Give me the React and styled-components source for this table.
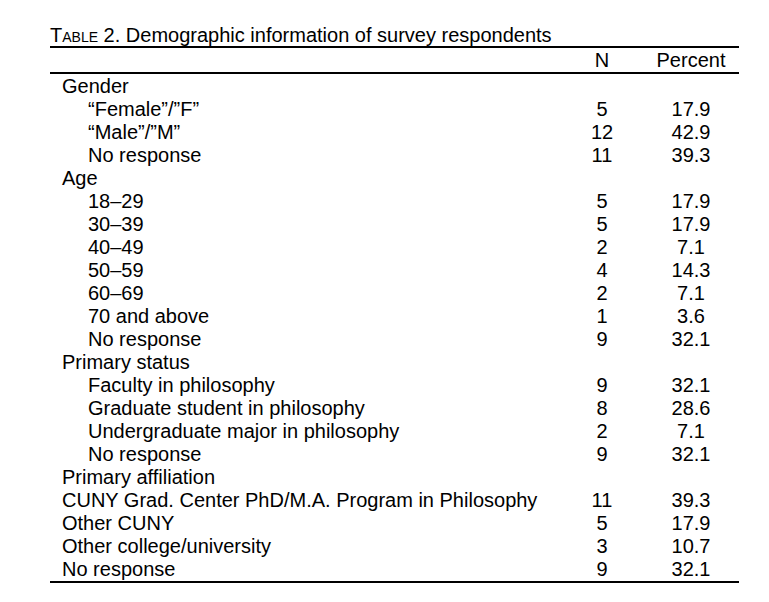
import React from "react";
import styled, { createGlobalStyle } from "styled-components";

const Global = createGlobalStyle`
  html, body { margin: 0; padding: 0; background: #fff; }
  body { font-family: "Liberation Sans", Arial, sans-serif; color: #000; }
`;

const Page = styled.div`
  width: 769px;
  height: 602px;
  padding: 24px 0 0 50px;
  box-sizing: border-box;
`;

const Caption = styled.div`
  font-size: 20px;
  line-height: 22px;
  height: 22px;
  white-space: nowrap;
`;

const SmallCaps = styled.span`
  font-variant: small-caps;
`;

const Table = styled.div`
  width: 689px;
  border-top: 2px solid #000;
  border-bottom: 2px solid #000;
`;

const Body = styled.div`
  padding-top: 1px;
`;

const Row = styled.div`
  display: grid;
  grid-template-columns: 1fr 82px 96px;
  height: ${(p) => (p.$head ? "24px" : "23px")};
  line-height: ${(p) => (p.$head ? "24px" : "23px")};
  font-size: 20px;
  border-bottom: ${(p) => (p.$head ? "2px solid #000" : "none")};
  white-space: nowrap;
`;

const Label = styled.div`
  padding-left: ${(p) => (p.$indent ? "38px" : "12px")};
`;

const Num = styled.div`
  text-align: center;
`;

const data = [
  ["Gender"],
  ["\u201cFemale\u201d/\u201dF\u201d", "5", "17.9", true],
  ["\u201cMale\u201d/\u201dM\u201d", "12", "42.9", true],
  ["No response", "11", "39.3", true],
  ["Age"],
  ["18\u201329", "5", "17.9", true],
  ["30\u201339", "5", "17.9", true],
  ["40\u201349", "2", "7.1", true],
  ["50\u201359", "4", "14.3", true],
  ["60\u201369", "2", "7.1", true],
  ["70 and above", "1", "3.6", true],
  ["No response", "9", "32.1", true],
  ["Primary status"],
  ["Faculty in philosophy", "9", "32.1", true],
  ["Graduate student in philosophy", "8", "28.6", true],
  ["Undergraduate major in philosophy", "2", "7.1", true],
  ["No response", "9", "32.1", true],
  ["Primary affiliation"],
  ["CUNY Grad. Center PhD/M.A. Program in Philosophy", "11", "39.3", false],
  ["Other CUNY", "5", "17.9", false],
  ["Other college/university", "3", "10.7", false],
  ["No response", "9", "32.1", false],
];

export default function App() {
  return (
    <Page>
      <Global />
      <Caption>
        <SmallCaps>Table</SmallCaps> 2. Demographic information of survey respondents
      </Caption>
      <Table>
        <Row $head>
          <Label />
          <Num>N</Num>
          <Num>Percent</Num>
        </Row>
        <Body>
          {data.map(([label, n, pct, indent], i) => (
            <Row key={i}>
              <Label $indent={indent}>{label}</Label>
              <Num>{n || ""}</Num>
              <Num>{pct || ""}</Num>
            </Row>
          ))}
        </Body>
      </Table>
    </Page>
  );
}
